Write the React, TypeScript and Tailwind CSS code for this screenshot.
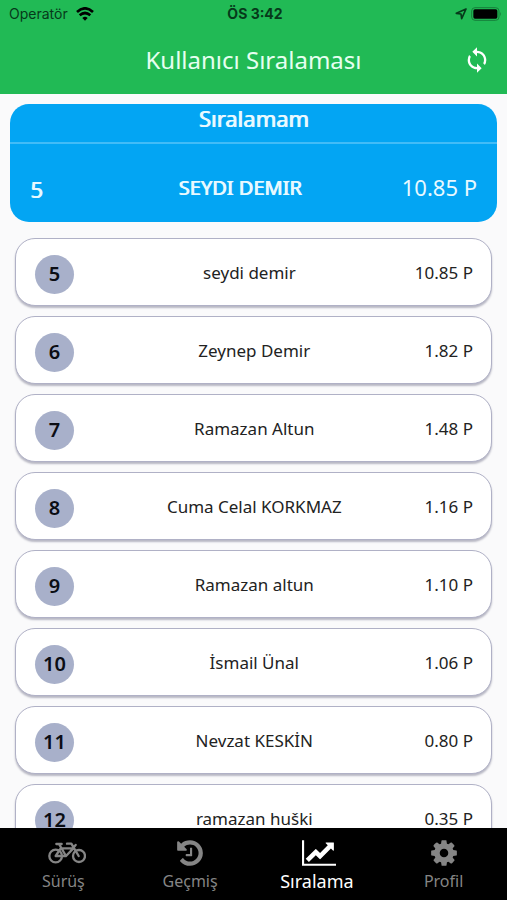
import type React from "react"

import { MdSync } from "react-icons/md"

const players = [
  { rank: 5, name: "seydi demir", points: "10.85 P" },
  { rank: 6, name: "Zeynep Demir", points: "1.82 P" },
  { rank: 7, name: "Ramazan Altun", points: "1.48 P" },
  { rank: 8, name: "Cuma Celal KORKMAZ", points: "1.16 P" },
  { rank: 9, name: "Ramazan altun", points: "1.10 P" },
  { rank: 10, name: "İsmail Ünal", points: "1.06 P" },
  { rank: 11, name: "Nevzat KESKİN", points: "0.80 P" },
  { rank: 12, name: "ramazan huški", points: "0.35 P" },
]

export default function App() {
  return (
    <div className="flex h-screen flex-col overflow-hidden bg-[#fafafb] font-['Noto_Sans','Open_Sans',sans-serif] text-[#222]">
      <header className="shrink-0 bg-[#21ba55]">
        <StatusBar />
        <div className="grid h-[66px] grid-cols-[60px_1fr_60px] items-center pb-[2px]">
          <h1 className="col-start-2 text-center text-2xl text-[#e6fff0]">Kullanıcı Sıralaması</h1>
          <button type="button" aria-label="Yenile" className="flex h-12 items-center justify-center text-white">
            <MdSync size={28} />
          </button>
        </div>
      </header>

      <main className="min-h-0 flex-1 overflow-y-auto pt-[10px] [scrollbar-width:none]">
        <MyRank />
        <ul className="mx-[15px] mt-4 space-y-[10px] pb-[10px]">
          {players.map((player) => (
            <PlayerCard key={player.rank} {...player} />
          ))}
        </ul>
      </main>

      <nav className="grid h-[72px] shrink-0 grid-cols-4 bg-black pt-3">
        <Tab label="Sürüş" icon={<BicycleIcon />} />
        <Tab label="Geçmiş" icon={<HistoryIcon />} />
        <Tab label="Sıralama" icon={<ChartIcon />} active />
        <Tab label="Profil" icon={<CogIcon />} />
      </nav>
    </div>
  )
}

function StatusBar() {
  return (
    <div className="grid h-7 grid-cols-3 items-center pr-[6px] pl-[9px] font-['Inter',sans-serif] text-sm text-[#06391a]">
      <div className="flex items-center gap-2">
        <span>Operatör</span>
        <WifiIcon />
      </div>
      <span className="text-center font-bold">ÖS 3:42</span>
      <div className="flex items-center justify-end gap-1">
        <LocationIcon />
        <BatteryIcon />
      </div>
    </div>
  )
}

// Highlighted card with the signed-in rider's own place
function MyRank() {
  return (
    <section className="mx-[10px] overflow-hidden rounded-[19px] bg-[#03a5f3] text-[#e8f9ff]">
      <h2 className="h-10 border-b-2 border-[#42bcf7] text-center text-[22px] leading-7 [text-shadow:1px_0_currentColor]">
        Sıralamam
      </h2>
      <div className="flex h-[78px] items-center px-5 pt-2">
        <span className="mt-1 w-12 text-[22px] [text-shadow:1px_0_currentColor]">5</span>
        <span className="mt-[2px] flex-1 text-center text-xl [text-shadow:1px_0_currentColor]">SEYDI DEMIR</span>
        <span className="text-[22px] whitespace-nowrap">10.85 P</span>
      </div>
    </section>
  )
}

function PlayerCard({ rank, name, points }: { rank: number; name: string; points: string }) {
  return (
    <li className="flex h-[68px] items-center rounded-[20px] border border-[#b0b1c6] bg-white pt-[2px] pr-[18px] pl-[19px] shadow-[0_2px_2px_#b8b8c4]">
      <span className="mt-[2px] mr-[10px] flex size-[39px] items-center justify-center rounded-full bg-[#a8b0ca] text-xl font-semibold text-[#0b0d14]">
        {rank}
      </span>
      <span className="flex-1 text-center text-[17px]">{name}</span>
      <span className="text-[17px] whitespace-nowrap">{points}</span>
    </li>
  )
}

function Tab({ label, icon, active = false }: { label: string; icon: React.ReactNode; active?: boolean }) {
  return (
    <a
      href="#"
      aria-current={active ? "page" : undefined}
      className={`flex flex-col items-center ${active ? "text-lg text-white" : "text-base text-[#858585]"}`}
    >
      <span className="flex h-[26px] w-[30px] items-center">{icon}</span>
      <span className="leading-[30px]">{label}</span>
    </a>
  )
}

function BicycleIcon() {
  return (
    <svg className="shrink-0" width="38" height="24" viewBox="0 0 114 72" fill="none" stroke="currentColor" strokeWidth="7" strokeLinejoin="round" strokeLinecap="round">
      <circle cx="23" cy="45" r="19" />
      <circle cx="93" cy="45" r="18" />
      <path d="M23 45 38 22H76L54 45H23M54 45 33 9M25 9H41M92 45 70 8H57M76 20l7-8" />
    </svg>
  )
}

function HistoryIcon() {
  return (
    <svg className="shrink-0" width="30" height="30" viewBox="0 0 1792 1792" fill="currentColor">
      <path d="M1664 896q0 156-61 298t-164 245-245 164-298 61q-172 0-327-72.5t-264-204.5q-7-10-6.5-22.5t8.5-20.5l137-138q10-9 25-9 16 2 23 12 73 95 179 147t225 52q104 0 198.5-40.5t163.5-109.5 109.5-163.5 40.5-198.5-40.5-198.5-109.5-163.5-163.5-109.5-198.5-40.5q-98 0-188 35.5t-160 101.5l137 138q31 30 14 69-17 40-59 40h-448q-26 0-45-19t-19-45v-448q0-42 40-59 39-17 69 14l130 129q107-101 244.5-156.5t284.5-55.5q156 0 298 61t245 164 164 245 61 298zm-640-288v448q0 14-9 23t-23 9h-320q-14 0-23-9t-9-23v-64q0-14 9-23t23-9h224v-352q0-14 9-23t23-9h64q14 0 23 9t9 23z" />
    </svg>
  )
}

function ChartIcon() {
  return (
    <svg className="shrink-0" width="34" height="30" viewBox="0 0 2048 1792" fill="currentColor">
      <path d="M2048 1536v128h-2048v-1536h128v1408h1920zm-128-1248v435q0 21-19.5 29.5t-35.5-7.5l-121-121-633 633q-10 10-23 10t-23-10l-233-233-416 416-192-192 585-585q10-10 23-10t23 10l233 233 464-464-121-121q-16-16-7.5-35.5t29.5-19.5h435q14 0 23 9t9 23z" />
    </svg>
  )
}

function CogIcon() {
  return (
    <svg className="shrink-0" width="30" height="30" viewBox="0 0 1792 1792" fill="currentColor">
      <path d="M1152 896q0-106-75-181t-181-75-181 75-75 181 75 181 181 75 181-75 75-181zm512-109v222q0 12-8 23t-20 13l-185 28q-19 54-39 91 35 50 107 138 10 12 10 25t-9 23q-27 37-99 108t-94 71q-12 0-26-9l-138-108q-44 23-91 38-16 136-29 186-7 28-36 28h-222q-14 0-24.5-8.5t-11.5-21.5l-28-184q-49-16-90-37l-141 107q-10 9-25 9-14 0-25-11-126-114-165-168-7-10-7-23 0-12 8-23 15-21 51-66.5t54-70.5q-27-50-41-99l-183-27q-13-2-21-12.5t-8-23.5v-222q0-12 8-23t19-13l186-28q14-46 39-92-40-57-107-138-10-12-10-24 0-10 9-23 26-36 98.5-107.5t94.5-71.5q13 0 26 10l138 107q44-23 91-38 16-136 29-186 7-28 36-28h222q14 0 24.5 8.5t11.5 21.5l28 184q49 16 90 37l142-107q9-9 24-9 13 0 25 10 129 119 165 170 7 8 7 22 0 12-8 23-15 21-51 66.5t-54 70.5q26 50 41 98l183 28q13 2 21 12.5t8 23.5z" />
    </svg>
  )
}

function WifiIcon() {
  return (
    <svg width="18" height="14" viewBox="0 0 54 42" fill="none" stroke="#000" strokeWidth="8">
      <path d="M3 15Q27-7 51 15M11 25q16-14 32 0" />
      <path d="M19 33q8-7 16 0l-8 8z" fill="#000" stroke="none" />
    </svg>
  )
}

function LocationIcon() {
  return (
    <svg width="12" height="12" viewBox="0 0 36 36" fill="none" stroke="#06391a" strokeWidth="5" strokeLinejoin="round">
      <path d="M33 3 4 16l14 2 2 14z" />
    </svg>
  )
}

function BatteryIcon() {
  return (
    <svg width="30" height="14" viewBox="0 0 90 42">
      <rect x="2" y="2" width="82" height="38" rx="10" fill="none" stroke="#16803b" strokeWidth="3" />
      <rect x="7" y="7" width="72" height="28" rx="5" />
      <path d="M87 15q5 6 0 12z" fill="#16803b" />
    </svg>
  )
}
